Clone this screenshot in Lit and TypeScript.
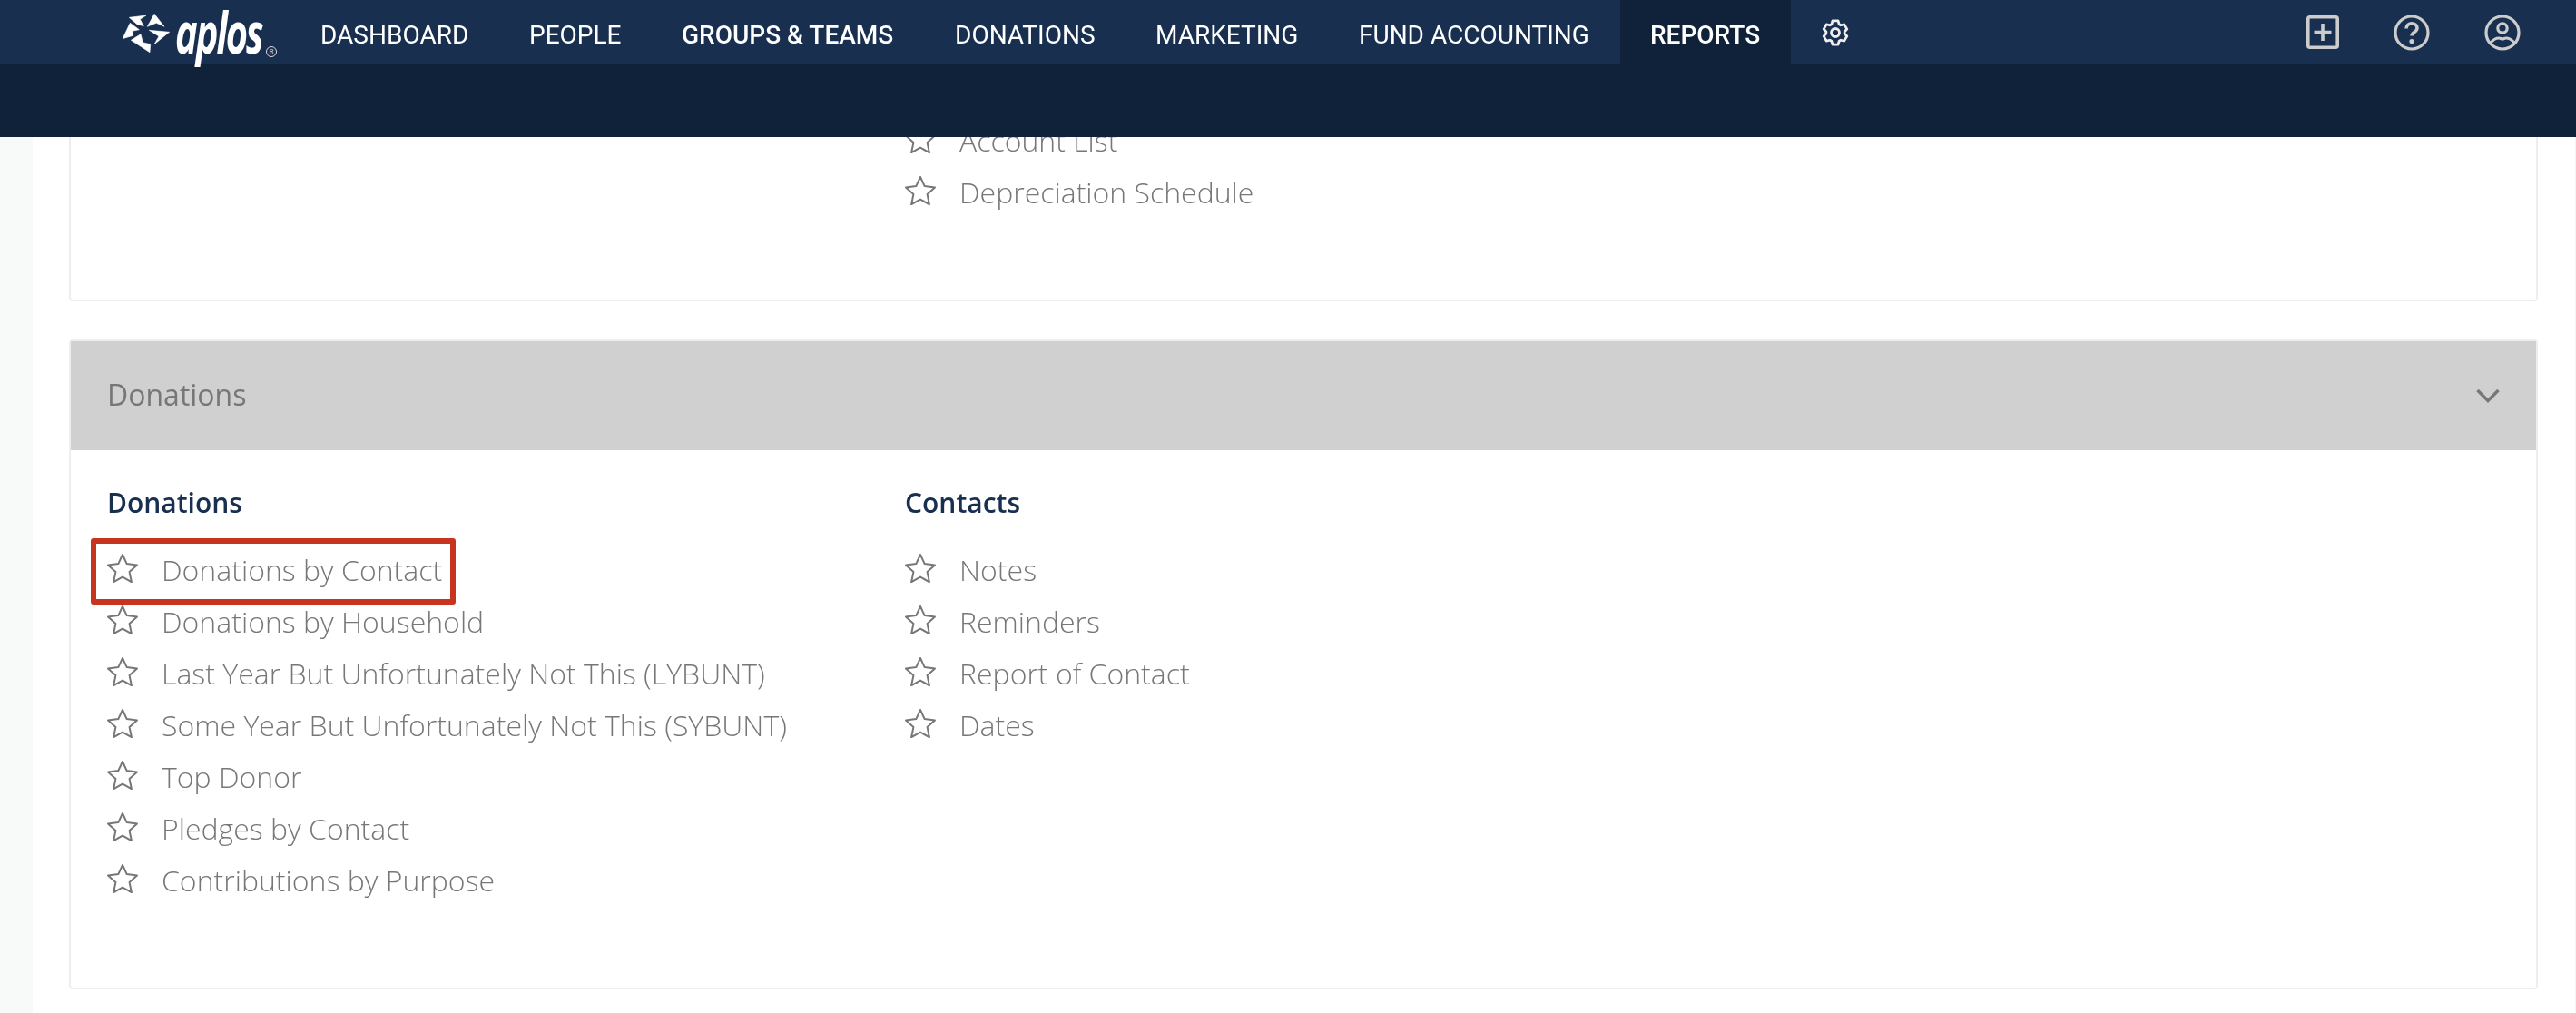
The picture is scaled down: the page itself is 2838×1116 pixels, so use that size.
import { LitElement, html, css, svg } from "lit";
import { customElement } from "lit/decorators.js";

const star = html`<svg class="star" viewBox="0 0 34 32" aria-hidden="true"><polygon points="17,1 21.700,11.100 33,12.400 24.600,20.100 26.900,31.200 17,25.600 7.100,31.200 9.400,20.100 1,12.400 12.300,11.100"/></svg>`;

const nav: [string, string][] = [
  ["DASHBOARD", ""],
  ["PEOPLE", ""],
  ["GROUPS & TEAMS", "strong"],
  ["DONATIONS", ""],
  ["MARKETING", ""],
  ["FUND ACCOUNTING", ""],
  ["REPORTS", "active"],
];

function gearPath(): string {
  const pts: string[] = [];
  const at = (deg: number, r: number) => {
    const a = ((deg - 90) * Math.PI) / 180;
    return `${(15 + r * Math.cos(a)).toFixed(2)} ${(15 + r * Math.sin(a)).toFixed(2)}`;
  };
  for (let i = 0; i < 6; i++) {
    const c = i * 60;
    pts.push(at(c - 24, 10.2), at(c - 13, 13.4), at(c + 13, 13.4), at(c + 24, 10.2));
  }
  return `M${pts.join("L")}Z`;
}

@customElement("app-root")
export class AppRoot extends LitElement {
  static styles = css`
    :host { display: block; width: 2838px; height: 1116px; overflow: hidden; position: relative; background: #fff; font-family: "Open Sans", sans-serif; }
    .top { height: 71px; background: #182f50; display: flex; align-items: stretch; color: #fff; font: 400 28px/77px Roboto, sans-serif; padding-left: 135px; }
    .sub { height: 80px; background: #10223a; }
    .logo { display: flex; align-items: center; width: 184px; flex: none; position: relative; }
    .logo svg { width: 52px; height: 46px; margin-top: 3px; flex: none; }
    .word { font: italic 700 62px/70px "Open Sans", sans-serif; letter-spacing: -3px; margin: -2px -60px 0 6px; flex: none; transform: scaleX(.67); transform-origin: left center; color: #fff; }
    .reg { position: absolute; left: 158px; top: 51px; width: 10px; height: 10px; border: 1px solid #d5dae1; border-radius: 50%; text-align: center; color: #d5dae1; font: 400 8px/10px Roboto, sans-serif; }
    .item { padding: 0 33.5px; white-space: nowrap; }
    .item span, .head span, h3 span, li span { display: block; will-change: transform; }
    .item.strong { font-weight: 500; }
    .item.active { font-weight: 500; background: #10223a; }
    .gear { width: 30px; height: 30px; margin-left: 34px; align-self: center; flex: none; }
    .right { margin-left: auto; display: flex; align-items: center; padding-right: 61px; gap: 60px; }
    .right svg { display: block; flex: none; }
    .main { height: 965px; overflow: hidden; position: relative; background: linear-gradient(90deg, #f8faf9 36px, #fff 36px, #fff 2837px, #f4f4f4 2837px); padding: 0 42px 0 76px; box-sizing: border-box; }
    .card { border: 2px solid #eee; border-radius: 4px; background: #fff; box-sizing: border-box; }
    .card1 { height: 281px; margin-top: -100px; padding: 0 40px; display: grid; grid-template-columns: repeat(3, 879px); }
    .card1 .list { padding-top: 73px; }
    .card1 .offset { grid-column: 2; }
    .card2 { margin-top: 42px; height: 716px; position: relative; }
    .head { height: 120px; background: #d0d0d0; color: #777; display: flex; align-items: center; justify-content: space-between; padding: 0 40px 3px 40px; box-sizing: border-box; font-size: 32px; font-weight: 400; }
    .chev { width: 26px; height: 16px; display: block; margin-top: 2px; }
    .body { display: grid; grid-template-columns: repeat(3, 879px); padding: 0 40px; }
    h3 { margin: 0; font: 600 30px/41px "Open Sans", sans-serif; color: #182f50; padding-top: 36.5px; padding-bottom: 25.5px; }
    ul { list-style: none; margin: 0; padding: 0; }
    li { height: 57px; display: flex; align-items: center; gap: 26px; font: 300 32px/57px "Open Sans", sans-serif; color: #777; white-space: nowrap; }
    .star { width: 34px; height: 32px; flex: none; fill: none; stroke: #777; stroke-width: 2; stroke-linejoin: round; margin-top: -4px; }
    .mark { position: absolute; left: 22px; top: 217px; width: 402px; height: 73px; box-sizing: border-box; border: 6px solid #c8351f; border-radius: 3px; }
  `;

  private list(items: string[]) {
    return html`<ul>${items.map((t) => html`<li>${star}<span>${t}</span></li>`)}</ul>`;
  }

  render() {
    return html`
      <div class="top">
        <div class="logo">
          <svg viewBox="0 0 52 46" aria-hidden="true" fill="#fff" stroke="#fff" stroke-width=".6" stroke-linejoin="round">
            ${svg`<polygon points="7.300,5.300 26,3 19.300,7.300 23.300,14.700 16,12.700"/>
            <polygon points="35,1.300 46,15.300 37.300,11.300 27.300,15.300"/>
            <polygon points="29.300,19.300 51.700,21.300 35,34.700 40,26"/>
            <polygon points="9.300,30.300 20,23.700 22.300,32.700 30.700,34.700 30,43.700"/>
            <polygon points="0,28.700 8.300,11.300 18.300,18.700 10.700,20.300 11.700,25.300"/>`}
          </svg>
          <span class="word">aplos</span>
          <span class="reg">R</span>
        </div>
        ${nav.map(([t, c]) => html`<div class="item ${c}"><span>${t}</span></div>`)}
        <svg class="gear" viewBox="0 0 30 30" fill="none" stroke="#eee" stroke-width="2.800" stroke-linejoin="round" aria-hidden="true">
          <circle cx="15" cy="15" r="4.500"/>
          <path d=${gearPath()}/>
        </svg>
        <div class="right">
          <svg width="36" height="37" viewBox="0 0 36 37" fill="none" stroke="#ccc" stroke-width="3.600" aria-hidden="true">
            <rect x="1.800" y="1.800" width="32.400" height="33.400" rx="2"/>
            <path d="M18 9v19M8.500 18.500h19"/>
          </svg>
          <svg width="40" height="40" viewBox="0 0 40 40" fill="none" stroke="#ccc" stroke-width="3.200" aria-hidden="true">
            <circle cx="20" cy="20" r="18"/>
            <path d="M14 15.500c0-3.500 2.700-5.600 6-5.600s6 2 6 5c0 4.500-6 4.500-6 8.600" stroke-width="3.600"/>
            <circle cx="20" cy="29.500" r="2.600" fill="#ccc" stroke="none"/>
          </svg>
          <svg width="40" height="40" viewBox="0 0 40 40" fill="none" stroke="#ccc" stroke-width="3.200" aria-hidden="true">
            <circle cx="20" cy="20" r="18"/>
            <circle cx="20" cy="15" r="5.200"/>
            <path d="M7 31c3-3.500 6-5 9-5 2 0 2.500 1 4 1s2-1 4-1c3 0 6 1.500 9 5"/>
          </svg>
        </div>
      </div>
      <div class="sub"></div>
      <div class="main">
        <div class="card card1">
          <div class="list offset">${this.list(["Account List", "Depreciation Schedule"])}</div>
        </div>
        <div class="card card2">
          <div class="head"><span>Donations</span>
            <svg class="chev" viewBox="0 0 26 16" fill="none" stroke="#777" stroke-width="3.400" aria-hidden="true"><path d="M1.500 2L13 13.500 24.500 2"/></svg>
          </div>
          <div class="body">
            <div>
              <h3><span>Donations</span></h3>
              ${this.list(["Donations by Contact", "Donations by Household", "Last Year But Unfortunately Not This (LYBUNT)", "Some Year But Unfortunately Not This (SYBUNT)", "Top Donor", "Pledges by Contact", "Contributions by Purpose"])}
            </div>
            <div>
              <h3><span>Contacts</span></h3>
              ${this.list(["Notes", "Reminders", "Report of Contact", "Dates"])}
            </div>
          </div>
          <div class="mark"></div>
        </div>
      </div>
    `;
  }
}
